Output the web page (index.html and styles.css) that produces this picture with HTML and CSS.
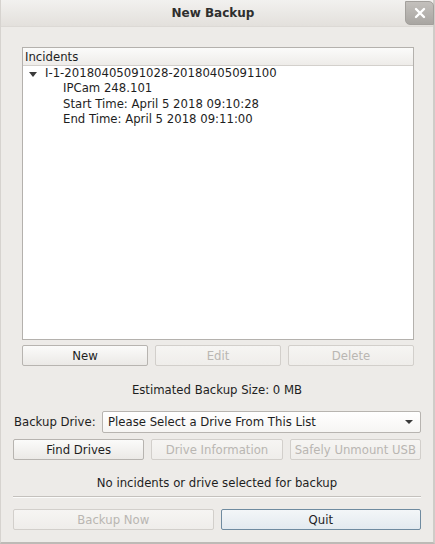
FILE: index.html
```html
<!DOCTYPE html>
<html>
<head>
<meta charset="utf-8">
<link rel="stylesheet" href="styles.css">
</head>
<body>
<div class="window">
  <div class="titlebar">
    <span class="title">New Backup</span>
    <div class="close">
      <svg width="14" height="14" viewBox="0 0 14 14"><path d="M3 3 L11 11 M11 3 L3 11" stroke="#fff" stroke-width="2.4" stroke-linecap="round"/></svg>
    </div>
  </div>
  <div class="content">
    <div class="incidents">
      <div class="tree">
        <div class="tree-header">Incidents</div>
        <div class="tree-body">
          <div class="row parent"><span class="arrow"></span>I-1-20180405091028-20180405091100</div>
          <div class="row child">IPCam 248.101</div>
          <div class="row child">Start Time: April 5 2018 09:10:28</div>
          <div class="row child">End Time: April 5 2018 09:11:00</div>
        </div>
      </div>
      <div class="btn-row three">
        <button class="btn">New</button>
        <button class="btn disabled">Edit</button>
        <button class="btn disabled">Delete</button>
      </div>
    </div>
    <div class="estimate">Estimated Backup Size: 0 MB</div>
    <div class="drive-row">
      <span class="label">Backup Drive:</span>
      <div class="combo"><span>Please Select a Drive From This List</span><span class="combo-arrow"></span></div>
    </div>
    <div class="btn-row three drive-btns">
      <button class="btn">Find Drives</button>
      <button class="btn disabled">Drive Information</button>
      <button class="btn disabled">Safely Unmount USB</button>
    </div>
    <div class="status">No incidents or drive selected for backup</div>
    <div class="separator"></div>
    <div class="btn-row two">
      <button class="btn disabled">Backup Now</button>
      <button class="btn focused">Quit</button>
    </div>
  </div>
</div>
</body>
</html>
```
FILE: styles.css
```css
* { box-sizing: border-box; }

html, body {
  margin: 0;
  padding: 0;
  background: #edebe8;
}

body {
  font-family: "DejaVu Sans", sans-serif;
  font-size: 11.7px;
  color: #1e1e1e;
}

.window {
  width: 435px;
  height: 544px;
  background: #edebe8;
  border-left: 1px solid #d6d3cf;
  border-right: 2px solid #cfccc8;
  border-bottom: 2px solid #bdbab6;
  display: flex;
  flex-direction: column;
}

.titlebar {
  height: 27px;
  position: relative;
  display: flex;
  align-items: center;
  justify-content: center;
  background: linear-gradient(#f2f1ef, #e3e0dc);
  border-bottom: 1px solid #dcd9d5;
}

.title {
  font-weight: bold;
  font-size: 12px;
  color: #2e2e2e;
  margin-left: -8px;
}

.close {
  position: absolute;
  right: -1px;
  top: 1px;
  width: 29px;
  height: 24px;
  border-radius: 0 5px 0 5px;
  background: linear-gradient(#c3c0bc, #a9a6a2);
  border: 1px solid #a3a09c;
  display: flex;
  align-items: center;
  justify-content: center;
}

.content {
  flex: 1;
  padding: 20px 12px 0 12px;
  display: flex;
  flex-direction: column;
}

.incidents {
  padding: 0 7px 0 9px;
}

.tree {
  height: 293px;
  background: #fff;
  border: 1px solid #b4b1ad;
  display: flex;
  flex-direction: column;
}

.tree-header {
  height: 18px;
  line-height: 18px;
  padding-left: 2px;
  background: linear-gradient(#fbfbfa, #eeece9);
  border-bottom: 1px solid #d3d0cc;
}

.tree-body {
  padding-top: 0;
}

.row {
  height: 15.3px;
  line-height: 15.3px;
  white-space: nowrap;
}

.parent {
  padding-left: 6px;
  display: flex;
  align-items: center;
}

.arrow {
  width: 0;
  height: 0;
  border-left: 4px solid transparent;
  border-right: 4px solid transparent;
  border-top: 5px solid #3a3a3a;
  margin-right: 8px;
  margin-top: 1px;
}

.child {
  padding-left: 40px;
}

.btn-row {
  display: grid;
  column-gap: 7px;
}

.btn-row.three {
  grid-template-columns: 1fr 1fr 1fr;
}

.btn-row.two {
  grid-template-columns: 1fr 1fr;
  margin-top: 11px;
}

.incidents .btn-row {
  margin-top: 5px;
}

.btn {
  height: 21px;
  font: inherit;
  color: #1e1e1e;
  background: linear-gradient(#fbfbfa, #ebe9e6);
  border: 1px solid #b7b4b0;
  border-radius: 2px;
  padding: 0;
  white-space: nowrap;
  overflow: hidden;
}

.btn.disabled {
  color: #b9b6b2;
  border-color: #d2cfcb;
  background: linear-gradient(#f6f5f3, #efedea);
}

.btn.focused {
  border-color: #6f8ba0;
  background: linear-gradient(#f3f6f8, #e3eaef);
}

.estimate {
  text-align: center;
  margin-top: 17px;
  height: 15px;
  line-height: 15px;
}

.drive-row {
  display: flex;
  align-items: center;
  margin-top: 13px;
  height: 22px;
}

.label {
  width: 89px;
  padding-left: 1px;
}

.combo {
  flex: 1;
  height: 22px;
  display: flex;
  align-items: center;
  justify-content: space-between;
  padding: 0 7px 0 5px;
  background: linear-gradient(#ffffff, #f6f5f3);
  border: 1px solid #b7b4b0;
  border-radius: 2px;
}

.combo-arrow {
  width: 0;
  height: 0;
  border-left: 4px solid transparent;
  border-right: 4px solid transparent;
  border-top: 4px solid #3a3a3a;
}

.drive-btns {
  margin-top: 6px;
}

.status {
  text-align: center;
  margin-top: 16px;
  height: 15px;
  line-height: 15px;
}

.separator {
  margin-top: 5px;
  height: 2px;
  border-top: 1px solid #c4c1bd;
  border-bottom: 1px solid #fbfbfa;
}
```
